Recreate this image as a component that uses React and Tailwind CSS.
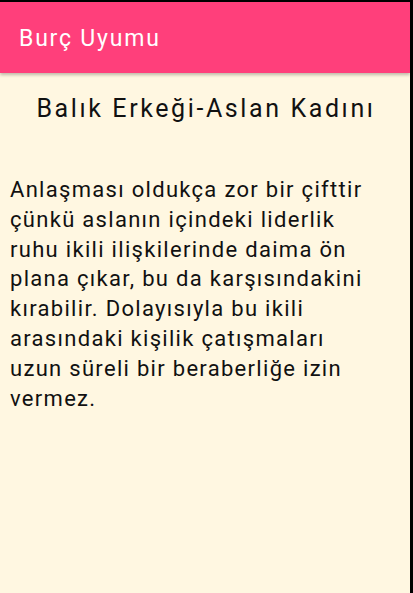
const lines = [
  "Anlaşması oldukça zor bir çifttir",
  "çünkü aslanın içindeki liderlik",
  "ruhu ikili ilişkilerinde daima ön",
  "plana çıkar, bu da karşısındakini",
  "kırabilir. Dolayısıyla bu ikili",
  "arasındaki kişilik çatışmaları",
  "uzun süreli bir beraberliğe izin",
  "vermez.",
];

export default function App() {
  return (
    <div className="w-[413px] h-[593px] bg-black pt-[2px] pr-[3px] overflow-hidden" style={{ fontFamily: "Roboto, 'Noto Sans', sans-serif" }}>
      <div className="h-full bg-[#fff7e1] flex flex-col">
        <div className="h-[71px] bg-[#ff3f7b] flex items-center pl-[19px] shadow-[0_2px_3px_rgba(0,0,0,0.25)] relative z-10">
          <span className="text-white text-[23px] tracking-[1.8px] leading-none pt-[1px]">Burç Uyumu</span>
        </div>
        <div className="text-center text-[#111] text-[25px] tracking-[2.6px] leading-[32px] mt-[20px] pl-[2px] whitespace-nowrap">Balık Erkeği-Aslan Kadını</div>
        <div className="text-[#111] text-[22px] tracking-[1.3px] leading-[29.8px] pl-[10px] mt-[50px] whitespace-nowrap">
          {lines.map((l) => (
            <div key={l}>{l}</div>
          ))}
        </div>
      </div>
    </div>
  );
}
